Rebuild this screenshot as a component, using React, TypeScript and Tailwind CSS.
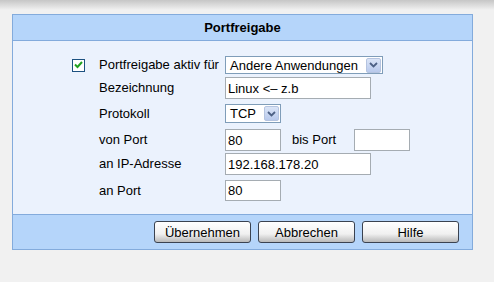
import React from 'react';

const font = { fontFamily: '"Liberation Sans", Arial, sans-serif' };

function SelectArrow() {
  return (
    <span className="flex h-[15px] w-[15px] items-center justify-center rounded-[2px] border border-[#b5c4e0] bg-gradient-to-b from-[#dbe5f7] to-[#b8c9ec]">
      <svg width="9" height="6" viewBox="0 0 9 6">
        <path d="M1 1 L4.5 4.5 L8 1" fill="none" stroke="#4d6185" strokeWidth="1.8" />
      </svg>
    </span>
  );
}

function FakeSelect({ value, width }: { value: string; width: string }) {
  return (
    <div className={`flex h-full items-center justify-between border border-[#7f9db9] bg-white pl-[4px] pr-[1px] ${width}`}>
      <span className="text-[13px] leading-none text-black">{value}</span>
      <SelectArrow />
    </div>
  );
}

function TextBox({ value, width }: { value: string; width: string }) {
  return (
    <input
      readOnly
      value={value}
      className={`h-full border border-[#a5acb2] bg-white px-[2px] text-[13px] text-black outline-none ${width}`}
      style={font}
    />
  );
}

function Row({
  label,
  height,
  className,
  children,
  check,
}: {
  label: string;
  height: string;
  className?: string;
  children: React.ReactNode;
  check?: boolean;
}) {
  return (
    <div className={`flex items-center ${height} ${className ?? ''}`}>
      <div className="flex w-[27px] items-center">
        {check && (
          <span className="flex h-[13px] w-[13px] items-center justify-center border border-[#1c5180] bg-white">
            <svg width="9" height="8" viewBox="0 0 9 8">
              <path d="M1 3.5 L3.5 6 L8 1" fill="none" stroke="#21a121" strokeWidth="2" />
            </svg>
          </span>
        )}
      </div>
      <div className="w-[126px] text-[13px] text-black">{label}</div>
      {children}
    </div>
  );
}

function XpButton({ label }: { label: string }) {
  return (
    <button className="h-[22px] w-[97px] rounded-[3px] border border-[#3a4250] bg-gradient-to-b from-white via-[#f0f0f0] via-60% to-[#b9b9b9] text-[13px] leading-none text-black">
      {label}
    </button>
  );
}

export default function App() {
  return (
    <div className="h-[282px] w-[494px] bg-[#f1f1f1]" style={font}>
      <div className="h-[10px] bg-gradient-to-b from-[#c6c6c6] to-[#f1f1f1]" />
      <div className="ml-[12px] mt-[4px] w-[461px] border border-[#83abdc]">
        {/* Header */}
        <div className="flex h-[26px] items-center justify-center border-b border-[#83abdc] bg-[#b5d5fa] text-[13px] font-bold text-black">
          Portfreigabe
        </div>

        {/* Body */}
        <div className="flex flex-col bg-[#ebf2fd] pb-[13px] pl-[59px] pt-[15px]">
          <Row label="Portfreigabe aktiv für" height="h-[18px]" check>
            <FakeSelect value="Andere Anwendungen" width="w-[158px]" />
          </Row>
          <Row label="Bezeichnung" height="h-[22px]" className="mt-[3px]">
            <TextBox value="Linux <– z.b" width="w-[146px]" />
          </Row>
          <Row label="Protokoll" height="h-[19px]" className="mt-[5px]">
            <FakeSelect value="TCP" width="w-[56px]" />
          </Row>
          <Row label="von Port" height="h-[22px]" className="mt-[6px]">
            <TextBox value="80" width="w-[56px]" />
            <span className="ml-[11px] w-[62px] text-[13px] text-black">bis Port</span>
            <TextBox value="" width="w-[56px]" />
          </Row>
          <Row label="an IP-Adresse" height="h-[22px]" className="mt-[2px]">
            <TextBox value="192.168.178.20" width="w-[146px]" />
          </Row>
          <Row label="an Port" height="h-[21px]" className="mt-[5px]">
            <TextBox value="80" width="w-[56px]" />
          </Row>
        </div>

        {/* Footer */}
        <div className="flex h-[35px] items-center justify-end gap-[7px] border-t border-[#83abdc] bg-[#b5d5fa] pr-[13px]">
          <XpButton label="Übernehmen" />
          <XpButton label="Abbrechen" />
          <XpButton label="Hilfe" />
        </div>
      </div>
    </div>
  );
}
